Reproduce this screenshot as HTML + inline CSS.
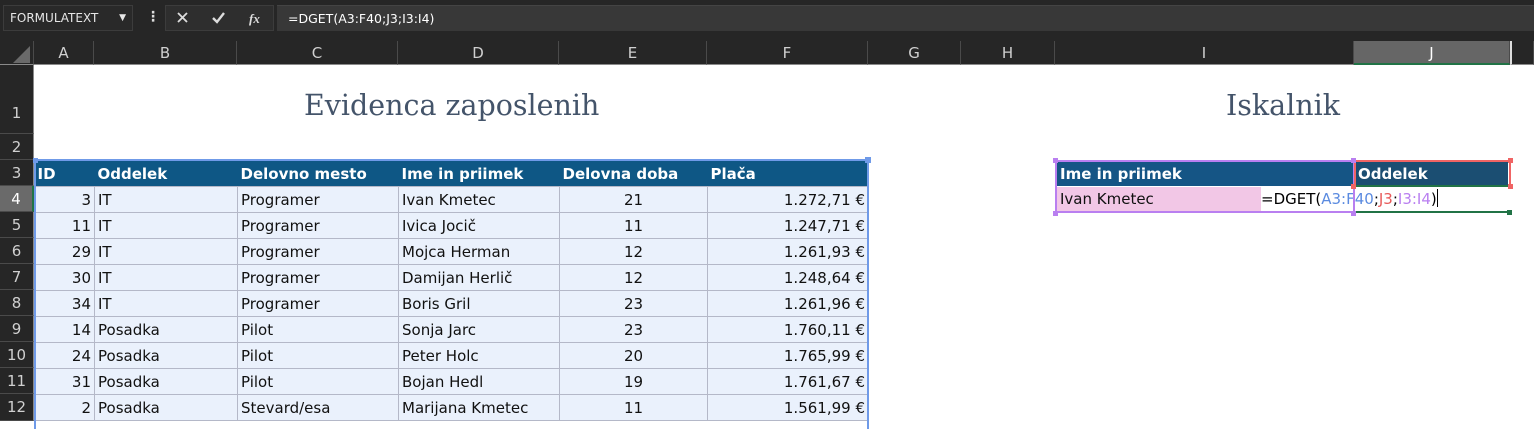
<!DOCTYPE html>
<html><head><meta charset="utf-8"><style>
*{margin:0;padding:0;box-sizing:border-box}
body{width:1534px;height:421px;overflow:hidden;background:#fff;position:relative;font-family:"DejaVu Sans",sans-serif}
.a{position:absolute}
.tb{left:0;top:0;width:1534px;height:41px;background:#262626}
.ch{top:41px;height:24px;background:#262626;border-bottom:1px solid #8a8a8a;color:#d0d0d0;font-size:15px;text-align:center;line-height:24px;border-right:1px solid #4a4a4a}
.rh{left:0;width:34px;background:#262626;color:#d0d0d0;font-size:15px;text-align:center;border-bottom:1px solid #4a4a4a;border-right:1px solid #8a8a8a}
table{position:absolute;left:34px;top:160px;border-collapse:collapse;table-layout:fixed;font-size:15px;color:#111}
td{height:26px;padding:1px 3px 0;white-space:nowrap;overflow:hidden;background:#eaf1fc;border:1px solid #b4b8c8}
tr.h td{background:#0e5785;color:#fff;font-weight:bold;border:none;border-top:1px solid #fff}
.r{text-align:right}.c{text-align:center}
.t{font-family:"DejaVu Serif",serif;font-size:28.5px;color:#44546a}
</style></head><body>
<div class="a tb"></div>
<div class="a" style="left:3px;top:5px;width:130px;height:26px;background:#292929;border:1px solid #3c3c3c;color:#e6e6e6;font-size:12px;line-height:24px;padding-left:6px">FORMULATEXT<span style="position:absolute;right:6px;top:0;font-size:9px">▼</span></div>
<div class="a" style="left:146px;top:9px;color:#ddd;font-size:14px;font-weight:bold">⋮</div>
<div class="a" style="left:165px;top:5px;width:109px;height:26px;background:#2e2e2e;border:1px solid #3c3c3c"></div>
<svg class="a" style="left:165px;top:5px" width="109" height="26"><path d="M13 8l9 9M22 8l-9 9" stroke="#ddd" stroke-width="1.8"/><path d="M48 13l4 4 7-9" stroke="#ddd" stroke-width="2.4" fill="none"/><text x="84" y="18" fill="#ddd" font-family="Liberation Serif" font-style="italic" font-weight="bold" font-size="13">fx</text></svg>
<div class="a" style="left:277px;top:5px;width:1257px;height:26px;background:#383838;border-top:1px solid #444;color:#fff;font-size:12.5px;line-height:25px;padding-left:11px">=DGET(A3:F40;J3;I3:I4)</div>
<div class="a" style="left:0;top:41px;width:34px;height:24px;background:#262626;border-right:1px solid #4a4a4a;border-bottom:1px solid #8a8a8a"><div class="a" style="left:13px;top:5px;width:0;height:0;border-left:17px solid transparent;border-bottom:17px solid #6a6a6a"></div></div>
<div class="a ch" style="left:34px;width:60px">A</div>
<div class="a ch" style="left:94px;width:143px">B</div>
<div class="a ch" style="left:237px;width:161px">C</div>
<div class="a ch" style="left:398px;width:161px">D</div>
<div class="a ch" style="left:559px;width:148px">E</div>
<div class="a ch" style="left:707px;width:161px">F</div>
<div class="a ch" style="left:868px;width:93px">G</div>
<div class="a ch" style="left:961px;width:94px">H</div>
<div class="a ch" style="left:1055px;width:299px">I</div>
<div class="a ch" style="left:1354px;width:156px;background:#666;color:#fff;border-bottom:2px solid #217346">J</div>
<div class="a ch" style="left:1510px;width:24px;border-left:2px solid #ddd"></div>
<div class="a rh" style="top:65px;height:69px;line-height:96px">1</div>
<div class="a rh" style="top:134px;height:26px;line-height:27px">2</div>
<div class="a rh" style="top:160px;height:26px;line-height:27px">3</div>
<div class="a rh" style="top:186px;height:26px;line-height:27px;background:#6a6a6a;color:#fff;border-right:2px solid #217346">4</div>
<div class="a rh" style="top:212px;height:26px;line-height:27px">5</div>
<div class="a rh" style="top:238px;height:26px;line-height:27px">6</div>
<div class="a rh" style="top:264px;height:26px;line-height:27px">7</div>
<div class="a rh" style="top:290px;height:26px;line-height:27px">8</div>
<div class="a rh" style="top:316px;height:26px;line-height:27px">9</div>
<div class="a rh" style="top:342px;height:26px;line-height:27px">10</div>
<div class="a rh" style="top:368px;height:26px;line-height:27px">11</div>
<div class="a rh" style="top:394px;height:27px;line-height:27px">12</div>
<div class="a t" style="left:304px;top:89px">Evidenca zaposlenih</div>
<div class="a t" style="left:1226px;top:89px">Iskalnik</div>
<table>
<colgroup><col style="width:60px"><col style="width:143px"><col style="width:161px"><col style="width:161px"><col style="width:148px"><col style="width:161px"></colgroup>
<tr class="h"><td>ID</td><td>Oddelek</td><td>Delovno mesto</td><td>Ime in priimek</td><td>Delovna doba</td><td>Plača</td></tr>
<tr><td class="r">3</td><td>IT</td><td>Programer</td><td>Ivan Kmetec</td><td class="c">21</td><td class="r">1.272,71 €</td></tr>
<tr><td class="r">11</td><td>IT</td><td>Programer</td><td>Ivica Jocič</td><td class="c">11</td><td class="r">1.247,71 €</td></tr>
<tr><td class="r">29</td><td>IT</td><td>Programer</td><td>Mojca Herman</td><td class="c">12</td><td class="r">1.261,93 €</td></tr>
<tr><td class="r">30</td><td>IT</td><td>Programer</td><td>Damijan Herlič</td><td class="c">12</td><td class="r">1.248,64 €</td></tr>
<tr><td class="r">34</td><td>IT</td><td>Programer</td><td>Boris Gril</td><td class="c">23</td><td class="r">1.261,96 €</td></tr>
<tr><td class="r">14</td><td>Posadka</td><td>Pilot</td><td>Sonja Jarc</td><td class="c">23</td><td class="r">1.760,11 €</td></tr>
<tr><td class="r">24</td><td>Posadka</td><td>Pilot</td><td>Peter Holc</td><td class="c">20</td><td class="r">1.765,99 €</td></tr>
<tr><td class="r">31</td><td>Posadka</td><td>Pilot</td><td>Bojan Hedl</td><td class="c">19</td><td class="r">1.761,67 €</td></tr>
<tr><td class="r">2</td><td>Posadka</td><td>Stevard/esa</td><td>Marijana Kmetec</td><td class="c">11</td><td class="r">1.561,99 €</td></tr>
</table>
<div class="a" style="left:34px;top:159px;width:835px;height:270px;border:2px solid #6f9ae8;border-bottom:none"></div>
<div class="a" style="left:33px;top:158px;width:5px;height:5px;background:#6f9ae8"></div>
<div class="a" style="left:865px;top:157px;width:6px;height:6px;background:#6f9ae8"></div>
<div class="a" style="left:1057px;top:161px;width:297px;height:25px;background:#155585;color:#fff;font-weight:bold;font-size:15px;line-height:26px;padding-left:3px">Ime in priimek</div>
<div class="a" style="left:1356px;top:161px;width:152px;height:25px;background:#1b4e72;color:#fff;font-weight:bold;font-size:15px;line-height:26px;padding-left:2px">Oddelek</div>
<div class="a" style="left:1057px;top:187px;width:204px;height:24px;background:#f2c7e6;color:#111;font-size:15px;line-height:25px;padding-left:3px">Ivan Kmetec</div>
<div class="a" style="left:1261px;top:187px;font-size:15px;line-height:25px;color:#000;white-space:nowrap">=DGET(<span style="color:#5b8be0">A3:F40</span>;<span style="color:#e85b5b">J3</span>;<span style="color:#b97ff0">I3:I4</span>)<span style="display:inline-block;width:1px;height:18px;background:#000;vertical-align:-3px"></span></div>
<div class="a" style="left:1055px;top:160px;width:300px;height:53px;border:2px solid #b97ff0"></div>
<div class="a" style="left:1354px;top:160px;width:157px;height:27px;border:2px solid #f06464"></div>
<div class="a" style="left:1356px;top:185px;width:153px;height:2px;background:#217346"></div>
<div class="a" style="left:1356px;top:211px;width:153px;height:2px;background:#217346"></div>
<div class="a" style="left:1507px;top:210px;width:5px;height:5px;background:#217346"></div>
<div class="a" style="left:1053px;top:158px;width:5px;height:5px;background:#b97ff0"></div>
<div class="a" style="left:1351px;top:158px;width:5px;height:5px;background:#b97ff0"></div>
<div class="a" style="left:1053px;top:211px;width:5px;height:5px;background:#b97ff0"></div>
<div class="a" style="left:1351px;top:211px;width:5px;height:5px;background:#b97ff0"></div>
<div class="a" style="left:1508px;top:158px;width:5px;height:5px;background:#f06464"></div>
<div class="a" style="left:1351px;top:184px;width:5px;height:5px;background:#f06464"></div>
<div class="a" style="left:1508px;top:184px;width:5px;height:5px;background:#f06464"></div>
</body></html>
